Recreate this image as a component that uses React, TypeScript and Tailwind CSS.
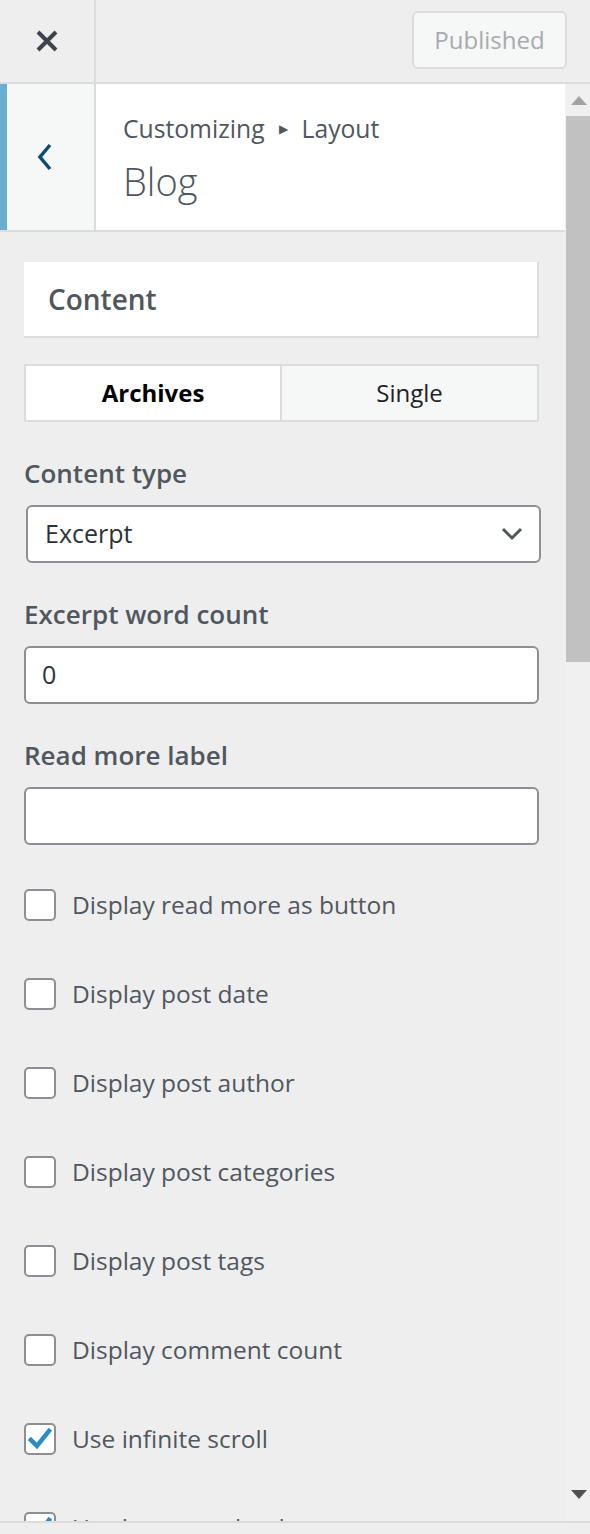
import React from "react";

const font = { fontFamily: '"Open Sans", "Noto Sans", Arial, sans-serif' };

const options = [
  { label: "Display read more as button", checked: false },
  { label: "Display post date", checked: false },
  { label: "Display post author", checked: false },
  { label: "Display post categories", checked: false },
  { label: "Display post tags", checked: false },
  { label: "Display comment count", checked: false },
  { label: "Use infinite scroll", checked: true },
  { label: "Use button to load more posts", checked: true },
];

function Checkbox({ checked }: { checked: boolean }) {
  return (
    <span className="flex h-[32px] w-[32px] shrink-0 items-center justify-center rounded-[5px] border-2 border-[#8c8f94] bg-white">
      {checked && (
        <svg width="24" height="22" viewBox="0 0 24 22">
          <path d="M3 12 L9 18 L21 3" fill="none" stroke="#2a8bc4" strokeWidth="4.5" strokeLinecap="square" />
        </svg>
      )}
    </span>
  );
}

function Field({ label, children }: { label: string; children: React.ReactNode }) {
  return (
    <div className="pt-[33px]">
      <div className="mb-[14px] h-[36px] text-[26px] font-semibold leading-[36px] text-[#50575e]">{label}</div>
      {children}
    </div>
  );
}

export default function App() {
  return (
    <div className="flex h-[1534px] w-[590px] flex-col overflow-hidden bg-[#eeeeee]" style={font}>
      {/* top bar */}
      <div className="flex h-[84px] shrink-0 border-b-2 border-[#dcdcde]">
        <div className="flex w-[96px] items-center justify-center border-r-2 border-[#dcdcde]">
          <svg width="24" height="24" viewBox="0 0 24 24">
            <path d="M3 3 L21 21 M21 3 L3 21" stroke="#3c434a" strokeWidth="4" />
          </svg>
        </div>
        <div className="flex flex-1 items-start justify-end pr-[23px] pt-[11px]">
          <div className="flex h-[58px] w-[155px] items-center justify-center rounded-[6px] border-2 border-[#dcdcde] bg-[#f6f7f7] text-[24px] text-[#a7aaad]">
            Published
          </div>
        </div>
      </div>

      {/* scroll area */}
      <div className="flex h-[1437px] shrink-0">
        <div className="w-[565px] overflow-hidden">
          <div className="flex h-[148px] border-b-2 border-[#dcdcde] bg-white">
            <div className="w-[7px] bg-[#6aaed2]" />
            <div className="flex w-[89px] items-center justify-center border-r-2 border-[#dcdcde] bg-[#f6f7f7] pr-[11px]">
              <svg width="18" height="30" viewBox="0 0 18 30">
                <path d="M14 3 L4 15 L14 27" fill="none" stroke="#0a4b78" strokeWidth="3.5" />
              </svg>
            </div>
            <div className="flex flex-col pl-[27px] pt-[27px] text-[#50575e]">
              <div className="flex items-center text-[24.7px] leading-[36px]">
                <span>Customizing</span>
                <span className="mx-[14px] text-[12px]">▶</span>
                <span>Layout</span>
              </div>
              <div className="mt-[7px] text-[38px] font-light leading-[54px]">Blog</div>
            </div>
          </div>

          <div className="pl-[24px] pr-[26px]">
            <div className="mt-[30px] flex h-[76px] items-center border-b-2 border-r-2 border-[#dcdcde] bg-white pl-[24px] text-[28px] font-semibold text-[#50575e]">
              Content
            </div>

            <div className="mt-[26px] flex h-[58px] border-2 border-[#dcdcde] text-[24px]">
              <div className="flex w-[256px] items-center justify-center border-r-2 border-[#dcdcde] bg-white font-bold text-black">
                Archives
              </div>
              <div className="flex flex-1 items-center justify-center bg-[#f6f7f7] text-[#1d2327]">Single</div>
            </div>

            <Field label="Content type">
              <div className="ml-[2px] mr-[-2px] flex h-[58px] items-center justify-between rounded-[6px] border-2 border-[#8c8f94] bg-white pl-[17px] pr-[16px] text-[25px] text-[#2c3338]">
                <span>Excerpt</span>
                <svg width="22" height="14" viewBox="0 0 22 14">
                  <path d="M2 2 L11 11 L20 2" fill="none" stroke="#50575e" strokeWidth="3" />
                </svg>
              </div>
            </Field>

            <Field label="Excerpt word count">
              <div className="flex h-[58px] items-center rounded-[6px] border-2 border-[#8c8f94] bg-white pl-[16px] text-[25px] text-[#2c3338]">
                0
              </div>
            </Field>

            <Field label="Read more label">
              <div className="h-[58px] rounded-[6px] border-2 border-[#8c8f94] bg-white" />
            </Field>

            <div className="flex flex-col gap-[57px] pt-[44px]">
              {options.map((o) => (
                <div key={o.label} className="flex h-[32px] items-center">
                  <Checkbox checked={o.checked} />
                  <span className="ml-[16px] text-[24.5px] leading-[32px] text-[#50575e]">{o.label}</span>
                </div>
              ))}
            </div>
          </div>
        </div>

        {/* scrollbar */}
        <div className="flex w-[25px] flex-col bg-[#f0f0f0]">
          <div className="flex h-[32px] items-center justify-center pl-[2px]">
            <svg width="16" height="9" viewBox="0 0 16 9">
              <path d="M0 9 L8 0 L16 9 Z" fill="#a3a3a3" />
            </svg>
          </div>
          <div className="ml-[1px] h-[546px] bg-[#c1c1c1]" />
          <div className="flex-1" />
          <div className="flex h-[32px] items-start justify-center pl-[2px] pt-[1px]">
            <svg width="16" height="9" viewBox="0 0 16 9">
              <path d="M0 0 L16 0 L8 9 Z" fill="#505050" />
            </svg>
          </div>
        </div>
      </div>

      {/* footer */}
      <div className="flex-1 border-t-2 border-[#dcdcde]" />
    </div>
  );
}
